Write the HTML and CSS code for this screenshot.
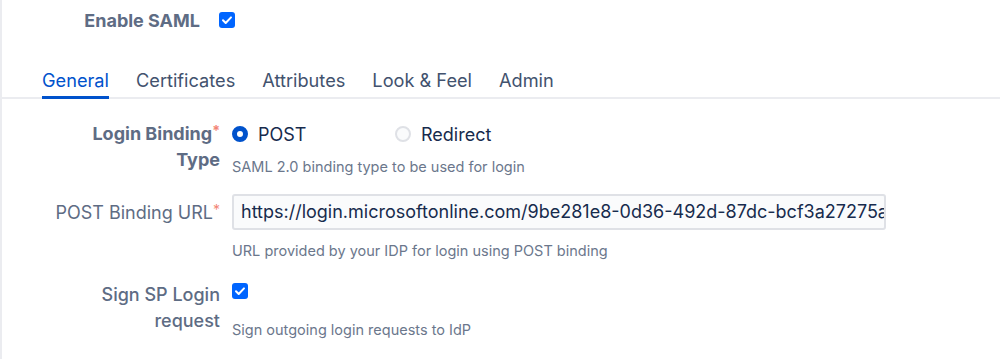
FILE: index.html
```html
<!DOCTYPE html>
<html lang="en">

<head>
    <meta charset="UTF-8">
    <title>SAML Settings</title>
    <link rel="stylesheet" href="styles.css">
</head>

<body>
    <div class="page">
        <!-- enable toggle -->
        <div class="enable-row">
            <span class="enable-label">Enable SAML</span>
            <span class="checkbox checked">
                <svg viewBox="0 0 16 16" width="16" height="16"><path d="M4 8.3l2.7 2.7L12 5.4" fill="none" stroke="#fff" stroke-width="2" stroke-linecap="round" stroke-linejoin="round"/></svg>
            </span>
        </div>

        <!-- tabs -->
        <div class="tabs">
            <span class="tab active">General</span>
            <span class="tab">Certificates</span>
            <span class="tab">Attributes</span>
            <span class="tab">Look &amp; Feel</span>
            <span class="tab">Admin</span>
        </div>

        <!-- form -->
        <div class="form">
            <div class="field binding">
                <div class="label bold">Login Binding<span class="req">*</span><br>Type</div>
                <div class="control">
                    <div class="radios">
                        <label class="radio-item"><span class="radio on"></span>POST</label>
                        <label class="radio-item"><span class="radio"></span>Redirect</label>
                    </div>
                    <div class="hint">SAML 2.0 binding type to be used for login</div>
                </div>
            </div>

            <div class="field url">
                <div class="label">POST Binding URL<span class="req">*</span></div>
                <div class="control">
                    <div class="input">https://login.microsoftonline.com/9be281e8-0d36-492d-87dc-bcf3a27275a1</div>
                    <div class="hint">URL provided by your IDP for login using POST binding</div>
                </div>
            </div>

            <div class="field sign">
                <div class="label semi">Sign SP Login<br>request</div>
                <div class="control">
                    <span class="checkbox checked">
                        <svg viewBox="0 0 16 16" width="16" height="16"><path d="M4 8.3l2.7 2.7L12 5.4" fill="none" stroke="#fff" stroke-width="2" stroke-linecap="round" stroke-linejoin="round"/></svg>
                    </span>
                    <div class="hint">Sign outgoing login requests to IdP</div>
                </div>
            </div>
        </div>
    </div>
</body>

</html>
```

FILE: styles.css
```css
/* page */
body {
    margin: 0;
    padding: 0;
    font-family: Inter, "Liberation Sans", sans-serif;
    color: #172b4d;
    background: #fff;
}

.page {
    border-left: 2px solid #ebecf0;
    height: 359px;
    box-sizing: border-box;
}

/* enable row */
.enable-row {
    display: flex;
    align-items: center;
    padding-top: 7px;
    height: 26px;
}

.enable-label {
    width: 198px;
    text-align: right;
    font-size: 18px;
    font-weight: 700;
    color: #5e6c84;
}

.checkbox {
    display: inline-flex;
    width: 16px;
    height: 16px;
    border-radius: 3px;
    background-color: #0065ff;
    flex-shrink: 0;
}

.enable-row .checkbox {
    margin-left: 19px;
}

/* tabs */
.tabs {
    display: flex;
    gap: 27px;
    margin-top: 36px;
    padding-left: 40px;
    border-bottom: 2px solid #ebecf0;
}

.tab {
    font-size: 18.2px;
    color: #42526e;
    padding-bottom: 5px;
    line-height: 22px;
    margin-bottom: -2px;
    border-bottom: 3px solid transparent;
}

.tab.active {
    color: #0052cc;
    border-bottom-color: #0052cc;
}

/* form */
.form {
    padding-top: 22px;
}

.field {
    display: grid;
    grid-template-columns: 218px 1fr;
    column-gap: 12px;
}

.label {
    text-align: right;
    font-size: 18px;
    line-height: 26px;
    color: #5e6c84;
}

.label.bold {
    font-weight: 700;
}

.label.semi {
    font-weight: 500;
}

.req {
    color: #ef5c48;
    font-size: 14px;
    vertical-align: top;
    position: relative;
    top: -3px;
    opacity: 0.75;
}

.radios {
    display: flex;
    height: 26px;
    align-items: center;
}

.radio-item {
    display: flex;
    align-items: center;
    gap: 10px;
    font-size: 18px;
    color: #172b4d;
    width: 163px;
}

.radio {
    width: 16px;
    height: 16px;
    border-radius: 50%;
    box-sizing: border-box;
    border: 2px solid #dfe1e6;
    background: #fafbfc;
}

.radio.on {
    border: 5px solid #0052cc;
    background: #fff;
}

.hint {
    font-size: 14.5px;
    color: #6b778c;
    line-height: 18px;
}

.binding .hint {
    margin-top: 11px;
}

.url {
    margin-top: 18px;
}

.url .label {
    padding-top: 6px;
}

.input {
    width: 654px;
    height: 36px;
    box-sizing: border-box;
    border: 2px solid #dfe1e6;
    border-radius: 3px;
    background: #fafbfc;
    padding: 0 7px;
    font-size: 18px;
    line-height: 32px;
    white-space: nowrap;
    overflow: hidden;
    color: #172b4d;
}

.url .hint {
    margin-top: 12px;
}

.sign {
    margin-top: 22px;
}

.sign .checkbox {
    margin-top: 1px;
}

.sign .hint {
    margin-top: 18px;
}
```
